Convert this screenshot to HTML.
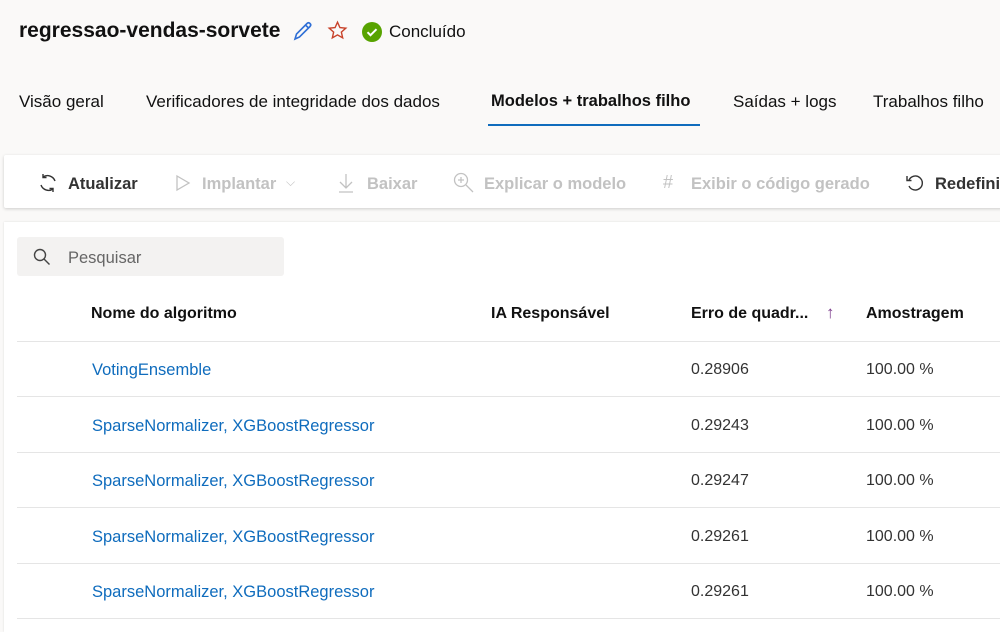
<!DOCTYPE html>
<html><head><meta charset="utf-8"><style>
*{margin:0;padding:0;box-sizing:border-box}
body{width:1000px;height:626px;overflow:hidden;background:#faf9f8;font-family:"Liberation Sans",sans-serif;color:#000;position:relative}
.a{position:absolute;white-space:nowrap}
.title{left:19px;top:19px;font-size:21px;font-weight:bold;color:#111}
.tab{top:92px;font-size:17px;color:#111}
.tb{left:4px;top:155px;width:1000px;height:53px;background:#fff;box-shadow:0 1px 3px rgba(0,0,0,.18);border-radius:2px}
.ti{top:175px;font-size:16.5px;color:#c2c2c2;font-weight:bold}
.card{left:4px;top:222px;width:1000px;height:410px;background:#fff;box-shadow:0 0 2px rgba(0,0,0,.12)}
.search{left:17px;top:237px;width:267px;height:39px;background:#f3f2f1;border-radius:3px}
.th{top:305px;font-size:16px;font-weight:bold;color:#111}
.row{left:17px;width:990px;height:1px;background:#e5e5e5}
.lk{left:92px;font-size:16.5px;color:#0f6cbd}
.v{font-size:16px;color:#333}
</style></head><body>
<div class="a title">regressao-vendas-sorvete</div>
<svg class="a" style="left:292px;top:20px" width="22" height="22" viewBox="0 0 22 22"><path d="M3 19 L4.5 14 L15 3.5 Q16.5 2 18 3.5 Q19.5 5 18 6.5 L7.5 17 Z M13.5 5 L16.5 8" fill="none" stroke="#2f6fd6" stroke-width="1.6"/></svg>
<svg class="a" style="left:327px;top:20px" width="21" height="21" viewBox="0 0 24 24"><path d="M12 2.5l2.8 6.2 6.7.6-5.1 4.5 1.5 6.6L12 17l-5.9 3.4 1.5-6.6L2.5 9.3l6.7-.6z" fill="none" stroke="#c8432b" stroke-width="1.6"/></svg>
<svg class="a" style="left:362px;top:22px" width="20" height="20" viewBox="0 0 20 20"><circle cx="10" cy="10" r="10" fill="#57a300"/><path d="M5.5 10.2l3 3 6-6" fill="none" stroke="#fff" stroke-width="2"/></svg>
<div class="a" style="left:389px;top:22px;font-size:17px;color:#111">Concluído</div>
<div class="a tab" style="left:19px">Visão geral</div>
<div class="a tab" style="left:146px">Verificadores de integridade dos dados</div>
<div class="a tab" style="left:491px;font-weight:bold;font-size:16.5px">Modelos + trabalhos filho</div>
<div class="a" style="left:488px;top:124px;width:212px;height:2px;background:#0f6cbd"></div>
<div class="a tab" style="left:733px">Saídas + logs</div>
<div class="a tab" style="left:873px">Trabalhos filho</div>
<div class="a tb"></div>
<svg class="a" style="left:37px;top:172px" width="22" height="22" viewBox="0 0 22 22" fill="none" stroke="#333" stroke-width="1.4"><path d="M6 5 A8 8 0 0 1 18 9 M16 17 A8 8 0 0 1 4 13"/><path d="M6 2v3.5h3.5M16 20v-3.5h-3.5"/></svg>
<div class="a ti" style="left:68px;color:#333">Atualizar</div>
<svg class="a" style="left:175px;top:174px" width="16" height="18" viewBox="0 0 16 18"><path d="M2 2 L14 9 L2 16 Z" fill="none" stroke="#c2c2c2" stroke-width="1.3"/></svg>
<div class="a ti" style="left:202px">Implantar</div>
<div class="a" style="left:286px;top:175px;font-size:12px;color:#c2c2c2">⌵</div>
<svg class="a" style="left:337px;top:172px" width="18" height="22" viewBox="0 0 18 22" fill="none" stroke="#c2c2c2" stroke-width="1.3"><path d="M9 2v14M3 10l6 6 6-6M2 20h14"/></svg>
<div class="a ti" style="left:367px">Baixar</div>
<svg class="a" style="left:453px;top:172px" width="22" height="22" viewBox="0 0 22 22" fill="none" stroke="#c2c2c2" stroke-width="1.3"><circle cx="8" cy="8" r="6.5"/><path d="M13 13l7 7M8 5v6M5 8h6"/></svg>
<div class="a ti" style="left:484px">Explicar o modelo</div>
<div class="a ti" style="left:663px;font-weight:normal;font-size:18px;top:172px">#</div>
<div class="a ti" style="left:691px">Exibir o código gerado</div>
<svg class="a" style="left:905px;top:173px" width="20" height="20" viewBox="0 0 20 20" fill="none" stroke="#333" stroke-width="1.4"><path d="M4 7 A7 7 0 1 1 4 13"/><path d="M2 3v4.5h4.5"/></svg>
<div class="a ti" style="left:935px;color:#333">Redefinir</div>
<div class="a card"></div>
<div class="a search"></div>
<svg class="a" style="left:33px;top:248px" width="18" height="18" viewBox="0 0 18 18" fill="none" stroke="#444" stroke-width="1.4"><circle cx="7" cy="7" r="5.5"/><path d="M11 11l5.5 5.5"/></svg>
<div class="a" style="left:68px;top:249px;font-size:16.5px;color:#666">Pesquisar</div>
<div class="a th" style="left:91px">Nome do algoritmo</div>
<div class="a th" style="left:491px">IA Responsável</div>
<div class="a th" style="left:691px">Erro de quadr...</div>
<div class="a" style="left:826px;top:303px;font-size:17px;color:#7a3a8a">↑</div>
<div class="a th" style="left:866px">Amostragem</div>
<div class="a row" style="top:341px"></div>
<div class="a lk" style="top:361px">VotingEnsemble</div><div class="a v" style="left:691px;top:361px">0.28906</div><div class="a v" style="left:866px;top:361px">100.00 %</div>
<div class="a row" style="top:396px"></div>
<div class="a lk" style="top:417px">SparseNormalizer, XGBoostRegressor</div><div class="a v" style="left:691px;top:417px">0.29243</div><div class="a v" style="left:866px;top:417px">100.00 %</div>
<div class="a row" style="top:452px"></div>
<div class="a lk" style="top:472px">SparseNormalizer, XGBoostRegressor</div><div class="a v" style="left:691px;top:472px">0.29247</div><div class="a v" style="left:866px;top:472px">100.00 %</div>
<div class="a row" style="top:507px"></div>
<div class="a lk" style="top:528px">SparseNormalizer, XGBoostRegressor</div><div class="a v" style="left:691px;top:528px">0.29261</div><div class="a v" style="left:866px;top:528px">100.00 %</div>
<div class="a row" style="top:563px"></div>
<div class="a lk" style="top:583px">SparseNormalizer, XGBoostRegressor</div><div class="a v" style="left:691px;top:583px">0.29261</div><div class="a v" style="left:866px;top:583px">100.00 %</div>
<div class="a row" style="top:618px"></div>
</body></html>
